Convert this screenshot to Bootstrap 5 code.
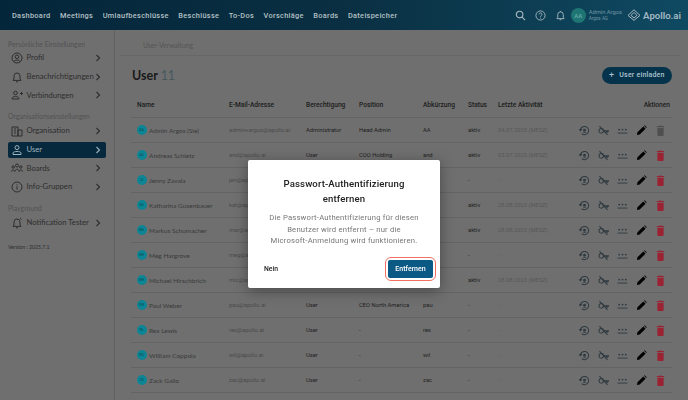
<!DOCTYPE html>
<html lang="en">
<head>
    <meta charset="UTF-8">
    <title>User-Verwaltung</title>
    <link href="https://cdn.jsdelivr.net/npm/bootstrap@5.3.0/dist/css/bootstrap.min.css" rel="stylesheet">
    <style>
        html, body { height: 100%; overflow: hidden; }
        body { font-family: "Lato", sans-serif; background: #6f6f6f; color: #1e1e1e; }
        .topbar { height: 30px; background: linear-gradient(90deg, #04263a, #0a2f42 50%, #0f4a62); padding: 0 7px 0 12px; }
        .topbar a { font: 500 7.4px "Roboto", sans-serif; letter-spacing: .3px; color: #b4c0c5; text-decoration: none; margin-right: 9.5px; }
        .ti { color: #a9b8bf; display: block; flex: none; }
        .ti-a { margin-right: 9px; }
        .ti-b { margin-right: 8.5px; }
        .ava { width: 10px; height: 10px; border-radius: 50%; background: #0d8595; color: #0a5660; font: 500 3.6px "Roboto", sans-serif; flex: none; }
        .ava-big { width: 15px; height: 15px; font-size: 6px; margin: 0 3px 0 5px; background: #1f7573; color: #62aaa6; }
        .who { font: 400 5.8px/1.4 "Roboto", sans-serif; color: #6f97a4; margin-right: 5px; }
        .who small { display: block; font-size: 4.6px; }
        .brand { font: 600 9.6px "Roboto", sans-serif; color: #a4b9c2; margin-left: 2px; }
        .page { height: 370px; }
        .side { width: 115px; border-right: 1px solid #626262; padding: 8px 8px 0; flex: none; }
        .side-h { font-size: 6.9px; color: #525252; line-height: 12px; margin: 6.7px 0 1px; }
        .side-h:first-child { margin: 0; }
        .side-i { height: 16px; margin-bottom: 2.7px; padding: 0 4px 0 2.5px; border-radius: 2px; font-size: 7.7px; color: #2e2e2e; }
        .side-i svg { flex: none; margin-right: 4px; }
        .side-i span { flex: 1; white-space: nowrap; }
        .side-i .chev { margin-right: 0; }
        .side-i.on { background: #06293d; color: #9fb3bd; }
        .vers { font-size: 5.2px; color: #2e2e2e; margin-top: 13px; }
        .main { flex: 1; padding: 0 16px; min-width: 0; }
        .crumb { font-size: 6.8px; color: #555; height: 26px; margin: 0 -8px 0 -11px; padding: 10px 0 0 23px; border-bottom: 1px solid #676767; }
        .ttl { font-size: 12.5px; font-weight: 700; margin: 0 0 0 1px; color: #1a1a1a; }
        .ttl em { font-style: normal; font-weight: 400; color: #46585c; }
        .btn-invite { background: #05334b; color: #b0c4ce; border-radius: 9px; height: 17px; width: 70px; padding: 0 8px 0 7px; font: 500 7px "Roboto", sans-serif; letter-spacing: .2px; border: 0; gap: 5px; white-space: nowrap; }
        .btn-invite:hover { background: #05334b; color: #b0c4ce; }
        .btn-invite span { font-size: 9px; font-weight: 400; }
        .head-row { height: 36.5px; padding-top: 1.5px; }
        .ulist { table-layout: fixed; width: 541px; margin: 0; --bs-table-bg: transparent; }
        .ulist th, .ulist td { padding: 0; vertical-align: middle; white-space: nowrap; border-color: #646464; }
        .ulist th { height: 25px; font: 500 6.6px "Roboto", sans-serif; color: #1c1c1c; }
        .ulist th:first-child { padding-left: 6px; }
        .ulist th:last-child { padding-right: 2px; }
        .ulist td { height: 25px; font: 400 5.8px "Roboto", sans-serif; color: #1e1e1e; }
        .ulist .nm { font: 400 6.5px "Lato", sans-serif; color: #3a3a3a; }
        .ulist .ml { color: #4b4b4b; }
        .ulist .dt { color: #585858; }
        .name-cell { gap: 2.5px; padding-left: 5.5px; }
        .acts { gap: 8px; justify-content: flex-end; padding-right: 6.5px; }
        .dim { position: fixed; inset: 0; backdrop-filter: blur(.6px); }
        .dlg { width: 192px; height: 128px; margin: 160px 0 0 248px; background: #fff; border-radius: 2px; padding: 16px 16px 0; text-align: center; font-family: "Roboto", sans-serif; box-shadow: 0 3px 14px rgba(0, 0, 0, .35); filter: blur(.25px); }
        .dlg h5 { font: 500 9.6px/15px "Roboto", sans-serif; letter-spacing: .12px; color: #222; margin: 0 0 6px; }
        .dlg p { font: 400 7.7px/11.6px "Roboto", sans-serif; letter-spacing: .19px; color: #777; margin: 0; white-space: nowrap; }
        .dlg-foot { margin-top: 10px; }
        .btn-no { font: 500 6.8px "Roboto", sans-serif; color: #222; }
        .ring { border: 1.5px solid #f2705f; border-radius: 6px; padding: 2px 2px; margin-right: -12px; }
        .btn-rm { display: block; background: #0b5a85; color: #fff; border: 0; border-radius: 2px; height: 18px; width: 45px; padding: 0; font: 500 7px "Roboto", sans-serif; }
    </style>
</head>
<body>
    <svg width="0" height="0" class="position-absolute">
        <symbol id="i-hist" viewBox="0 0 12 12"><path d="M1.5 6A4.5 4.5 0 1 1 3 9.4M.2 4.6l1.3 1.6 1.7-1.4" fill="none" stroke="currentColor" stroke-width="1.1"/><circle cx="6" cy="5.6" r="1.5" fill="currentColor"/><path d="M4.6 8h2.8" stroke="currentColor"/></symbol>
        <symbol id="i-key" viewBox="0 0 12 12"><circle cx="3.6" cy="6.4" r="2.5" fill="none" stroke="currentColor" stroke-width="1.1"/><path d="M6 6.4h5.6L10 8 8.4 6.8" fill="none" stroke="currentColor" stroke-width="1.1"/><path d="M1.6 1.2l8.8 9.6" stroke="currentColor" stroke-width="1.1"/></symbol>
        <symbol id="i-pw" viewBox="0 0 12 12"><path d="M.6 8.8h10.8" stroke="currentColor"/><circle cx="2.4" cy="5" r="1" fill="currentColor"/><circle cx="6" cy="5" r="1" fill="currentColor"/><circle cx="9.6" cy="5" r="1" fill="currentColor"/></symbol>
        <symbol id="i-pen" viewBox="0 0 12 12"><path d="M1 11l.6-3L8 1.6l2.4 2.4L4 10.4zM8.8.8l.7-.5 2.2 2.2-.6.8z" fill="currentColor"/></symbol>
        <symbol id="i-bin" viewBox="0 0 12 12"><path d="M2.6 3.2h6.8V11a1 1 0 0 1-1 1H3.6a1 1 0 0 1-1-1zM2 1.2h2.6L5 .6h2l.4.6H10v1.2H2z" fill="currentColor"/></symbol>
        <symbol id="i-chev" viewBox="0 0 8 8"><path d="M2.5 1l3 3-3 3" fill="none" stroke="currentColor" stroke-width="1.1"/></symbol>
    </svg>

    <div class="topbar d-flex align-items-center">
        <a href="#">Dashboard</a><a href="#">Meetings</a><a href="#">Umlaufbeschlüsse</a><a href="#">Beschlüsse</a><a href="#">To-Dos</a><a href="#">Vorschläge</a><a href="#">Boards</a><a href="#">Dateispeicher</a>
        <div class="ms-auto d-flex align-items-center">
            <svg class="ti ti-a" width="11" height="11" viewBox="0 0 12 12" fill="none" stroke="currentColor" stroke-width="1.2"><circle cx="5" cy="5" r="3.6"/><path d="M7.7 7.7L11 11"/></svg>
            <svg class="ti ti-b" width="11" height="11" viewBox="0 0 12 12" fill="none" stroke="currentColor"><circle cx="6" cy="6" r="5"/><path d="M4.4 4.8a1.6 1.6 0 1 1 2.4 1.4c-.6.4-.8.7-.8 1.3M6 8.4v1"/></svg>
            <svg class="ti" width="11" height="11" viewBox="0 0 12 12" fill="none" stroke="currentColor"><path d="M2 9.4h8L9 8V5a3 3 0 0 0-6 0v3zM5 10.6h2M6 1v1"/></svg>
            <div class="ava ava-big d-flex align-items-center justify-content-center">AA</div>
            <div class="who">Admin Argos<small>Argos AG</small></div>
            <svg class="ti" width="14" height="12" viewBox="0 0 14 12" fill="none" stroke="currentColor" stroke-width="1"><path d="M7 .8L1 6.4 7 11.4l6-5zM4 6.4l3-3 3 3M4 6.4l3 2.6 3-2.6"/></svg>
            <div class="brand">Apollo.ai</div>
        </div>
    </div>

    <div class="page d-flex">
        <div class="side" id="side"></div>
        <div class="main">
            <div class="crumb">User-Verwaltung</div>
            <div class="head-row d-flex align-items-center justify-content-between">
                <h2 class="ttl">User <em>11</em></h2>
                <button class="btn btn-invite d-flex align-items-center"><span>+</span> User einladen</button>
            </div>
            <table class="table ulist">
                <colgroup><col style="width:98px"><col style="width:77px"><col style="width:53px"><col style="width:64px"><col style="width:45px"><col style="width:30px"><col style="width:70px"><col></colgroup>
                <thead><tr><th>Name</th><th>E-Mail-Adresse</th><th>Berechtigung</th><th>Position</th><th>Abkürzung</th><th>Status</th><th>Letzte Aktivität</th><th class="text-end">Aktionen</th></tr></thead>
                <tbody id="rows"></tbody>
            </table>
        </div>
    </div>

    <div class="dim">
        <div class="dlg">
            <h5>Passwort-Authentifizierung entfernen</h5>
            <p>Die Passwort-Authentifizierung für diesen<br>Benutzer wird entfernt – nur die<br>Microsoft-Anmeldung wird funktionieren.</p>
            <div class="dlg-foot d-flex justify-content-between align-items-center">
                <span class="btn-no">Nein</span>
                <div class="ring"><button class="btn-rm">Entfernen</button></div>
            </div>
        </div>
    </div>

    <script src="https://cdn.jsdelivr.net/npm/bootstrap@5.3.0/dist/js/bootstrap.bundle.min.js"></script>
    <script>
        const sideItems = [
            ['h', 'Persönliche Einstellungen'],
            ['Profil', '<circle cx="6" cy="6" r="5"/><circle cx="6" cy="4.8" r="1.8"/><path d="M2.8 9.6c1-2 5.4-2 6.4 0"/>'],
            ['Benachrichtigungen', '<path d="M2 9.4h8L9 8V5a3 3 0 0 0-6 0v3zM5 10.8h2"/>'],
            ['Verbindungen', '<circle cx="4.5" cy="4" r="1.8"/><path d="M1 10c0-3.4 7-3.4 7 0zM9 4.5h3M10.5 3v3"/>'],
            ['h', 'Organisationseinstellungen'],
            ['Organisation', '<path d="M1 11V2h6v9zM7 5h4v6H7zM3 4h2M3 6h2M3 8h2"/>'],
            ['User', '<circle cx="6" cy="3.6" r="2"/><path d="M2 10.5V9c0-2 8-2 8 0v1.5z"/>', 1],
            ['Boards', '<circle cx="6" cy="3.5" r="1.5"/><circle cx="2.2" cy="5" r="1.2"/><circle cx="9.8" cy="5" r="1.2"/><path d="M.5 9.5c0-2 3-2 3 0M4 9.5c0-3 4-3 4 0M8.5 9.5c0-2 3-2 3 0"/>'],
            ['Info-Gruppen', '<circle cx="6" cy="6" r="5"/><path d="M6 5.4v3.2M6 3.4v1"/>'],
            ['h', 'Playground'],
            ['Notification Tester', '<path d="M2 9.4h8L9 8V5a3 3 0 0 0-6 0v3zM5 10.8h2M9 1l1.5 1.5"/>']
        ];
        document.getElementById('side').innerHTML = sideItems.map(it => it[0] === 'h'
            ? `<div class="side-h">${it[1]}</div>`
            : `<div class="side-i d-flex align-items-center ${it[2] ? 'on' : ''}"><svg width="12" height="12" viewBox="0 0 12 12" fill="none" stroke="currentColor">${it[1]}</svg><span>${it[0]}</span><svg class="chev" width="8" height="8"><use href="#i-chev"/></svg></div>`
        ).join('') + '<div class="vers">Version : 2025.7.1</div>';

        const users = [
            ['AA', 'Admin Argos (Sie)', 'admin+argos@apollo.ai', 'Administrator', 'Head Admin', 'AA', 'aktiv', '04.07.2025 (MESZ)'],
            ['AS', 'Andreas Schietz', 'and@apollo.ai', 'User', 'COO Holding', 'and', 'aktiv', '03.07.2025 (MESZ)'],
            ['JZ', 'Jenny Zavala', 'jen@apollo.ai', 'User', '-', 'jen', '-', '-'],
            ['KG', 'Katharina Gusenbauer', 'kat@apollo.ai', 'User', '-', 'kat', 'aktiv', '28.08.2023 (MESZ)'],
            ['MS', 'Markus Schumacher', 'mar@apollo.ai', 'User', '-', 'mar', 'aktiv', '28.08.2023 (MESZ)'],
            ['MH', 'Meg Hargrove', 'meg@apollo.ai', 'User', '-', 'meg', '-', '-'],
            ['MH', 'Michael Hirschbrich', 'mic@apollo.ai', 'User', '-', 'mic', 'aktiv', '28.08.2023 (MESZ)'],
            ['PW', 'Paul Weber', 'pau@apollo.ai', 'User', 'CEO North America', 'pau', '-', '-'],
            ['RL', 'Rex Lewis', 'rex@apollo.ai', 'User', '-', 'rex', '-', '-'],
            ['WC', 'William Coppola', 'wil@apollo.ai', 'User', '-', 'wil', '-', '-'],
            ['ZG', 'Zack Gallo', 'zac@apollo.ai', 'User', '-', 'zac', '-', '-']
        ];
        const icon = (id, color) => `<svg width="11" height="11" style="color:${color}"><use href="#i-${id}"/></svg>`;
        document.getElementById('rows').innerHTML = users.map((u, i) => `<tr>
            <td class="nm"><div class="d-flex align-items-center name-cell"><span class="ava d-flex align-items-center justify-content-center">${u[0]}</span>${u[1]}</div></td>
            <td class="ml">${u[2]}</td><td>${u[3]}</td><td>${u[4]}</td><td>${u[5]}</td><td>${u[6]}</td><td class="dt">${u[7]}</td>
            <td><div class="d-flex acts">${icon('hist', '#2f3a40')}${icon('key', '#2f3a40')}${icon('pw', '#2f3a40')}${icon('pen', '#000')}${icon('bin', i ? '#9b2232' : '#4f4f4f')}</div></td>
        </tr>`).join('');
    </script>
</body>
</html>
